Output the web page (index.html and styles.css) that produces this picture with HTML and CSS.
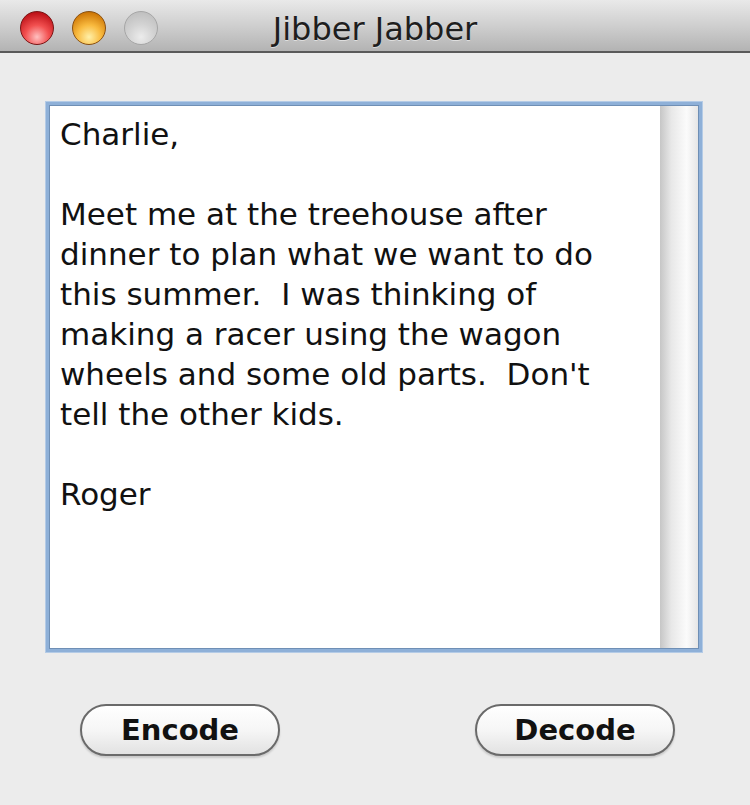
FILE: index.html
```html
<!DOCTYPE html>
<html lang="en">
<head>
    <meta charset="UTF-8">
    <title>Jibber Jabber</title>
    <link rel="stylesheet" href="styles.css">
</head>
<body>
    <div class="window">
        <!-- title bar -->
        <div class="titlebar">
            <div class="lights">
                <span class="light red"></span>
                <span class="light orange"></span>
                <span class="light grey"></span>
            </div>
            <div class="title">Jibber Jabber</div>
        </div>

        <div class="content">
            <!-- message box -->
            <div class="text-box">
                <div class="text">
                    <div class="line">Charlie,</div>
                    <div class="line">&nbsp;</div>
                    <div class="line">Meet me at the treehouse after</div>
                    <div class="line">dinner to plan what we want to do</div>
                    <div class="line">this summer.&nbsp; I was thinking of</div>
                    <div class="line">making a racer using the wagon</div>
                    <div class="line">wheels and some old parts.&nbsp; Don't</div>
                    <div class="line">tell the other kids.</div>
                    <div class="line">&nbsp;</div>
                    <div class="line">Roger</div>
                </div>
                <div class="scrollbar"></div>
            </div>

            <div class="buttons">
                <button class="btn">Encode</button>
                <button class="btn">Decode</button>
            </div>
        </div>
    </div>
</body>
</html>
```

FILE: styles.css
```css
body {
    margin: 0;
    background-color: #ececec;
    font-family: "DejaVu Sans", Verdana, sans-serif;
}
.window {
    width: 750px;
    height: 805px;
    background-color: #ececec;
}
/* title bar */
.titlebar {
    position: relative;
    height: 51px;
    background: linear-gradient(#e9e9e9, #cfcfcf 50%, #b3b3b3);
    border-bottom: 2px solid #5a5a5a;
}
.lights {
    display: flex;
    gap: 18px;
    padding: 11px 0 0 20px;
}
.light {
    width: 34px;
    height: 34px;
    border-radius: 50%;
    box-sizing: border-box;
}
.light.red {
    background: radial-gradient(circle at 50% 78%, #ffc0c0 0, #f25050 40%, #c0141a 80%, #8e0b0e 100%);
    border: 1px solid #7a1414;
}
.light.orange {
    background: radial-gradient(circle at 50% 78%, #fff0a8 0, #f9bb40 40%, #d07a08 80%, #9a5806 100%);
    border: 1px solid #8a5010;
}
.light.grey {
    background: radial-gradient(circle at 50% 78%, #ececec 0, #d2d2d2 45%, #b8b8b8 100%);
    border: 1px solid #a6a6a6;
}
.title {
    position: absolute;
    left: 0;
    right: 0;
    top: 10px;
    text-align: center;
    font-size: 32px;
    color: #1e1e1e;
    text-shadow: 0 1px 0 rgba(255,255,255,0.5);
}
/* main area */
.content {
    padding: 49px 0 0 46px;
}
.text-box {
    display: flex;
    width: 650px;
    height: 544px;
    border: 3px solid #8eb0d8;
    box-shadow: 0 0 0 1px #b4cbe6, inset 0 0 0 1px #6f8fb5;
    background-color: white;
}
.text {
    flex: 1;
    padding: 9px 0 0 11px;
    font-size: 31px;
    line-height: 40px;
    color: #111;
    white-space: nowrap;
}
.scrollbar {
    width: 38px;
    margin: 1px 1px 1px 0;
    background: linear-gradient(to right, #c6c6c6, #e8e8e8 30%, #fbfbfb 70%, #e6e6e6);
}
.buttons {
    display: flex;
    justify-content: space-between;
    width: 595px;
    margin: 52px 0 0 34px;
}
.btn {
    width: 200px;
    height: 52px;
    border: 2px solid #6a6a6a;
    border-radius: 26px;
    background: linear-gradient(#ffffff, #f6f6f6 50%, #e2e2e2);
    box-shadow: 0 2px 2px rgba(0,0,0,0.15);
    font-family: "DejaVu Sans", Verdana, sans-serif;
    font-weight: bold;
    font-size: 29px;
    color: #111;
}
```
